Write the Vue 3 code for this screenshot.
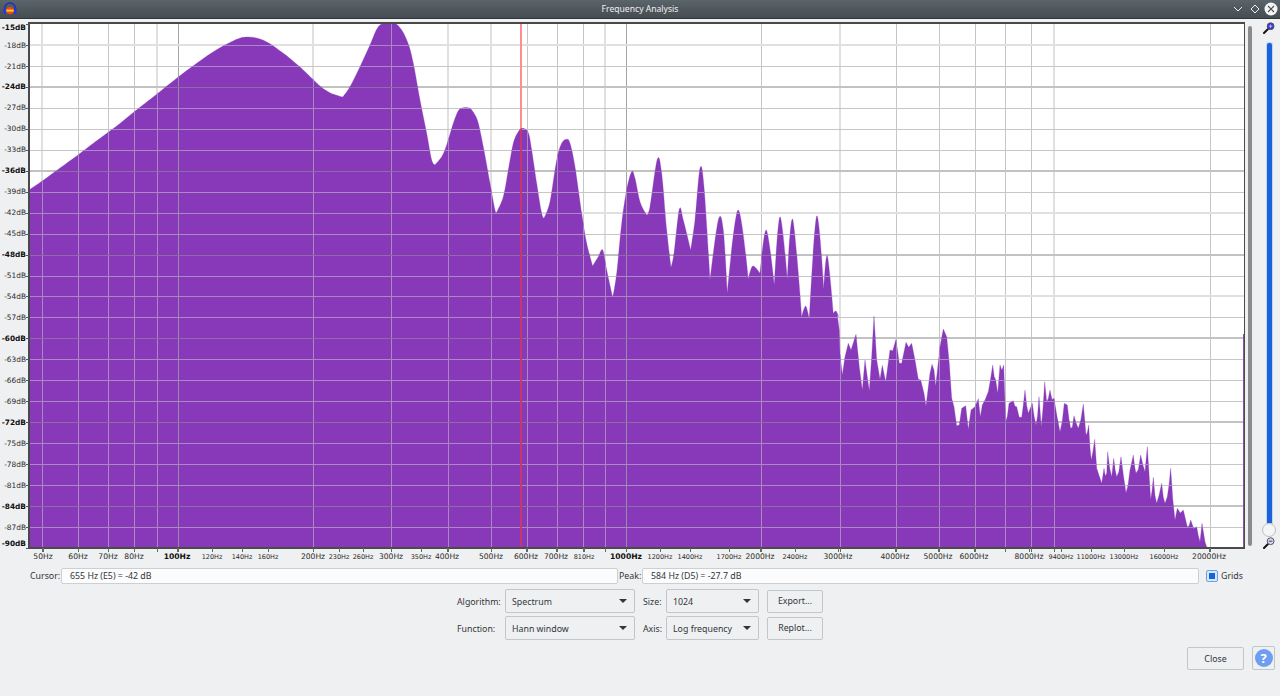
<script setup>
const Y0 = 24
const DY = 20.96
const yOf = (db) => Y0 + ((-15 - db) / 3) * DY

// traced outline, per zoomed region: [originX, originY, points in 3x zoom pixels]
const map = (ox, oy, pts) => pts.map(([x, y]) => [ox + x / 3, oy + y / 3])
const head = [
  [29, 190], [45, 179], [60, 168], [78, 155], [95, 142], [118, 125], [134, 112], [157, 94], [177, 78], [193, 66],
  [213, 52], [233, 41], [246, 37], [263, 40], [283, 53], [300, 67], [320, 86]
]
const mid = map(330, 20, [
  [0, 218], [20, 226], [38, 231], [60, 200], [90, 140], [120, 75], [140, 28], [155, 12], [175, 9], [195, 10], [215, 30], [235, 72],
  [250, 130], [270, 240], [290, 340], [305, 420], [315, 434], [335, 410], [350, 375], [370, 310], [385, 272], [400, 263],
  [420, 265], [435, 285], [445, 310], [460, 380], [480, 490], [495, 570], [500, 576], [520, 530], [535, 450], [550, 370],
  [565, 335], [578, 325], [595, 338], [605, 390], [620, 490], [635, 580], [642, 594], [660, 545], [680, 420], [695, 370],
  [710, 358], [720, 370], [735, 440], [755, 580], [770, 670], [788, 738], [805, 710], [818, 690], [830, 750], [848, 832]
])
const peaks = map(600, 120, [
  [50, 460], [65, 310], [80, 210], [95, 155], [105, 175], [120, 245], [140, 285], [150, 260], [172, 118], [185, 160], [200, 330],
  [213, 442], [222, 400], [238, 268], [250, 300], [272, 390], [285, 300], [300, 145], [312, 200], [330, 480], [355, 300],
  [370, 330], [382, 520], [414, 270], [445, 478], [458, 438], [480, 460], [499, 330], [523, 495], [540, 290], [562, 478],
  [578, 298], [605, 590], [617, 558], [628, 598], [650, 288], [671, 507], [682, 407], [700, 580], [708, 573], [716, 590]
])
const tail = map(830, 300, [
  [22, 45], [28, 90], [30, 160], [37, 225], [45, 170], [55, 130], [63, 150], [78, 103], [88, 200], [97, 270], [105, 180],
  [112, 230], [118, 272], [125, 170], [132, 48], [140, 180], [150, 238], [157, 196], [167, 245], [180, 150], [188, 152], [198, 118],
  [208, 190], [215, 190], [228, 127], [236, 142], [245, 130], [255, 180], [265, 238], [272, 240], [282, 280], [288, 318], [300, 220],
  [306, 193], [312, 210], [317, 258], [330, 140], [340, 87], [350, 110], [358, 190], [365, 295], [372, 320], [380, 378], [388, 374],
  [395, 325], [407, 317], [415, 388], [423, 330], [435, 320], [445, 296], [451, 350], [457, 315], [465, 300], [475, 275], [488, 195],
  [497, 240], [503, 280], [510, 195], [521, 195], [527, 365], [537, 310], [550, 302], [560, 320], [575, 352], [585, 270], [595, 340],
  [607, 310], [618, 375], [627, 290], [634, 380], [644, 245], [650, 305], [660, 270], [672, 295], [690, 395], [703, 310], [712, 315],
  [722, 385], [732, 347], [745, 385], [760, 312], [768, 405], [776, 375], [784, 480], [794, 418], [800, 505], [815, 550], [822, 505],
  [830, 520], [833, 455], [845, 530], [851, 475], [860, 530], [873, 470], [888, 578], [900, 510], [910, 465], [918, 520], [932, 465],
  [945, 515], [952, 440], [962, 598], [970, 532], [980, 610], [995, 550], [1005, 610], [1012, 590], [1022, 505], [1035, 660],
  [1042, 625], [1060, 630], [1072, 680], [1082, 660], [1100, 680], [1110, 725], [1116, 670], [1125, 725], [1135, 742]
])

const f = (n) => n.toFixed(1)
const isValley = (a, b, c) => a && c && b[1] >= a[1] && b[1] >= c[1]
function smooth(pts) {
  let d = `M${f(pts[0][0])} ${f(pts[0][1])}`
  for (let i = 0; i < pts.length - 1; i++) {
    const p0 = pts[i - 1] || pts[i]
    const p1 = pts[i]
    const p2 = pts[i + 1]
    const p3 = pts[i + 2] || p2
    // valleys in the spectrum are sharp, so their tangent collapses to a corner
    const c1 = isValley(pts[i - 1], p1, p2)
      ? p1
      : [p1[0] + (p2[0] - p0[0]) / 6, p1[1] + (p2[1] - p0[1]) / 6]
    const c2 = isValley(p1, p2, pts[i + 2])
      ? p2
      : [p2[0] - (p3[0] - p1[0]) / 6, p2[1] - (p3[1] - p1[1]) / 6]
    d += `C${f(c1[0])} ${f(c1[1])} ${f(c2[0])} ${f(c2[1])} ${f(p2[0])} ${f(p2[1])}`
  }
  return d
}

// the high end is jagged at a finer scale than the traced points
function roughen(pts) {
  const out = []
  pts.forEach((p, i) => {
    out.push(p)
    const q = pts[i + 1]
    if (q && p[0] > 985 && q[0] - p[0] > 2.5) {
      const k = (i * 7) % 5
      out.push([(p[0] + q[0]) / 2, (p[1] + q[1]) / 2 + k * 1.3])
    }
  })
  return out
}

const spectrumPath =
  smooth([...head, ...mid, ...peaks]) +
  roughen(tail).map((p) => `L${f(p[0])} ${f(p[1])}`).join('') +
  'L1208.5 548L29.5 548Z'

const LIGHT = 'light'
const MID = 'mid'
const DARK = 'dark'
const xOf = (hz) => Math.round(177.5 + 448.5 * Math.log10(hz / 100))
const vLines = [
  [50, LIGHT], [60, MID], [70, MID], [80, MID], [90, LIGHT], [100, DARK],
  [200, LIGHT], [300, MID], [400, LIGHT], [500, LIGHT], [600, MID], [700, MID], [800, MID], [900, LIGHT], [1000, DARK],
  [2000, MID], [3000, LIGHT], [4000, MID], [5000, MID], [6000, MID], [7000, MID], [8000, MID], [9000, LIGHT], [20000, MID]
].map(([hz, kind]) => ({ x: xOf(hz), kind }))

const lightDb = [-18, -42, -54]
const hLines = []
for (let db = -18; db >= -87; db -= 3) {
  hLines.push({
    y: Math.round(yOf(db)),
    kind: (db + 24) % 12 === 0 ? DARK : lightDb.includes(db) ? LIGHT : MID
  })
}

const dbLabels = []
for (let db = -15; db >= -90; db -= 3) {
  const y = db === -15 ? 27 : db === -90 ? 543 : yOf(db)
  dbLabels.push({
    text: `${db}dB`,
    y: y + 2.6,
    bold: db === -15 || db === -90 || (db + 24) % 12 === 0,
    tick: Math.round(yOf(db))
  })
}

const hzLabels = [
  ['50Hz', 43, 'big'], ['60Hz', 78, 'big'], ['70Hz', 108, 'big'], ['80Hz', 134, 'big'], ['100Hz', 177, 'bold'],
  ['120Hz', 212, 'small'], ['140Hz', 242, 'small'], ['160Hz', 268, 'small'], ['200Hz', 313, 'big'], ['230Hz', 339, 'small'],
  ['260Hz', 363, 'small'], ['300Hz', 391, 'big'], ['350Hz', 421, 'small'], ['400Hz', 447, 'big'], ['500Hz', 491, 'big'],
  ['600Hz', 526, 'big'], ['700Hz', 556, 'big'], ['810Hz', 584, 'small'], ['1000Hz', 626, 'bold'], ['1200Hz', 660, 'small'],
  ['1400Hz', 690, 'small'], ['1700Hz', 729, 'small'], ['2000Hz', 760, 'big'], ['2400Hz', 795, 'small'], ['3000Hz', 838, 'big'],
  ['4000Hz', 895, 'big'], ['5000Hz', 938, 'big'], ['6000Hz', 974, 'big'], ['8000Hz', 1029, 'big'], ['9400Hz', 1061, 'small'],
  ['11000Hz', 1091, 'small'], ['13000Hz', 1124, 'small'], ['16000Hz', 1164, 'small'], ['20000Hz', 1209, 'big']
].map(([text, x, kind]) => ({ text, x, kind }))

const tickXs = [...new Set([...vLines.map((l) => l.x), ...hzLabels.map((l) => l.x)])]
</script>

<template>
  <div class="window">
    <header class="titlebar">
      <svg class="app-icon" width="14" height="14" viewBox="0 0 14 14">
        <path d="M1.6 8V6.2a5.4 5.2 0 0 1 10.8 0V8" fill="none" stroke="#1b2fc4" stroke-width="1.5" />
        <rect x="0.4" y="6.4" width="3" height="5.6" rx="1.4" fill="#1d3be0" />
        <rect x="10.6" y="6.4" width="3" height="5.6" rx="1.4" fill="#1d3be0" />
        <ellipse cx="7" cy="8.6" rx="4" ry="3.7" fill="#f0451c" />
        <rect x="3.4" y="7.6" width="7.2" height="2" fill="#f8cf1e" />
      </svg>
      <span class="title">Frequency Analysis</span>
      <div class="win-buttons">
        <svg width="10" height="8" viewBox="0 0 10 8"><path d="M1 2l4 4 4-4" fill="none" stroke="#eff0f1" stroke-width="1" /></svg>
        <svg width="10" height="10" viewBox="0 0 10 10"><path d="M5 1l4 4-4 4-4-4z" fill="none" stroke="#eff0f1" stroke-width="1" /></svg>
        <svg class="win-close" width="14" height="14" viewBox="0 0 14 14">
          <circle cx="7" cy="7" r="6.5" fill="#f4f5f5" />
          <path d="M4 4l6 6M10 4l-6 6" stroke="#454c52" stroke-width="1.1" />
        </svg>
      </div>
    </header>

    <div class="plot-row">
      <svg class="plot" width="1246" height="546" viewBox="0 19 1246 546">
        <defs>
          <clipPath id="spectrum-clip"><path :d="spectrumPath" /></clipPath>
        </defs>
        <rect x="29" y="23" width="1215" height="525" fill="#fff" />

        <g shape-rendering="crispEdges">
          <line v-for="l in vLines" :key="'v' + l.x" :x1="l.x" :x2="l.x" y1="23" y2="548" :class="['w', 'v', l.kind]" />
          <line v-for="l in hLines" :key="'h' + l.y" x1="29" x2="1244" :y1="l.y" :y2="l.y" :class="['w', l.kind]" />
        </g>
        <rect x="520" y="23" width="2" height="525" fill="#ff8f8f" />

        <path :d="spectrumPath" class="spectrum" />

        <g clip-path="url(#spectrum-clip)" shape-rendering="crispEdges">
          <line v-for="l in vLines" :key="'pv' + l.x" :x1="l.x" :x2="l.x" y1="23" y2="548" :class="['p', 'v', l.kind]" />
          <line v-for="l in hLines" :key="'ph' + l.y" x1="29" x2="1244" :y1="l.y" :y2="l.y" :class="['p', l.kind]" />
          <rect x="520" y="23" width="2" height="525" fill="#c4386c" />
        </g>

        <g shape-rendering="crispEdges">
          <line x1="1243.5" x2="1243.5" y1="334" y2="548" stroke="#8a50ae" />
          <path d="M29 548V23H1244.5V548" class="frame" />
          <line x1="29" x2="1245" y1="548" y2="548" class="frame" />
          <line v-for="l in dbLabels" :key="'t' + l.text" x1="26" x2="29" :y1="l.tick" :y2="l.tick" stroke="#555" />
          <line v-for="x in tickXs" :key="'x' + x" :x1="x" :x2="x" y1="548" y2="552" stroke="#666" />
        </g>

        <text v-for="l in dbLabels" :key="l.text" x="26" :y="l.y" text-anchor="end" :class="['db', { bold: l.bold }]">{{ l.text }}</text>
        <text v-for="l in hzLabels" :key="l.text" :x="l.x" y="558.5" text-anchor="middle" :class="['hz', l.kind]">{{ l.text }}</text>
      </svg>

      <div class="scroll-thumb"></div>

      <div class="zoom-col">
        <svg width="12" height="12" viewBox="0 0 12 12">
          <path d="M5 7L1 11" stroke="#111" stroke-width="2" stroke-linecap="round" />
          <circle cx="7.6" cy="4.2" r="3.4" fill="#3232e0" stroke="#555" stroke-width="1" />
          <path d="M5.8 4.2h3.6M7.6 2.4v3.6" stroke="#cfd2f5" stroke-width=".8" />
        </svg>
        <div class="zoom-track">
          <div class="zoom-fill"></div>
          <div class="zoom-handle"></div>
        </div>
        <svg width="12" height="12" viewBox="0 0 12 12">
          <path d="M5 7L1 11" stroke="#111" stroke-width="2" stroke-linecap="round" />
          <circle cx="7.6" cy="4.2" r="3.4" fill="#d9dae6" stroke="#555" stroke-width="1" />
          <path d="M5.8 4.2h3.6" stroke="#3232c0" stroke-width="1" />
        </svg>
      </div>
    </div>

    <div class="readouts">
      <label class="lbl cursor-lbl">Cursor:</label>
      <div class="field">655 Hz (E5) = -42 dB</div>
      <label class="lbl peak-lbl">Peak:</label>
      <div class="field">584 Hz (D5) = -27.7 dB</div>
      <span class="check"><span class="check-mark"></span></span>
      <label class="lbl">Grids</label>
    </div>

    <div class="settings">
      <label class="lbl">Algorithm:</label>
      <div class="combo">Spectrum<i></i></div>
      <label class="lbl">Size:</label>
      <div class="combo">1024<i></i></div>
      <button class="btn small-btn">Export...</button>

      <label class="lbl">Function:</label>
      <div class="combo">Hann window<i></i></div>
      <label class="lbl">Axis:</label>
      <div class="combo">Log frequency<i></i></div>
      <button class="btn small-btn">Replot...</button>
    </div>

    <div class="footer">
      <button class="btn close-btn">Close</button>
      <button class="btn help-btn"><span class="help-icon">?</span></button>
    </div>
  </div>
</template>

<style scoped>
.window {
  width: 1280px;
  height: 696px;
  background: #eff0f1;
  color: #31363b;
  font-family: "Noto Sans", sans-serif;
  font-size: 8.8px;
  overflow: hidden;
  display: flex;
  flex-direction: column;
}
.titlebar {
  position: relative;
  height: 19px;
  box-sizing: border-box;
  flex: none;
  display: flex;
  align-items: center;
  justify-content: center;
  background: linear-gradient(#5b646b, #454c52);
  border-bottom: 1px solid #30363a;
}
.app-icon {
  position: absolute;
  left: 3px;
  top: 2px;
}
.title {
  color: #eff0f1;
  font-size: 8.6px;
}
.win-buttons {
  position: absolute;
  right: 2px;
  top: 2px;
  display: flex;
  align-items: center;
  gap: 7px;
  height: 14px;
}
.win-close {
  margin-left: -3px;
}
.plot-row {
  height: 546px;
  flex: none;
  display: flex;
}
.plot {
  display: block;
  flex: none;
}
.w.light { stroke: #e0e0e0; stroke-width: 2; }
.w.mid { stroke: #c6c6c6; stroke-width: 1; }
.w.dark { stroke: #c2c2c2; stroke-width: 2; }
.w.v.dark { stroke: #a4a4a4; stroke-width: 1; }
.p.light { stroke: #a988c2; stroke-width: 1; }
.p.mid { stroke: #a98bbf; stroke-width: 1; }
.p.dark { stroke: #8d6ca1; stroke-width: 1; }
.p.v.dark { stroke: #9c8aaa; stroke-width: 1; }
.spectrum {
  fill: #8739ba;
  stroke: rgba(135, 57, 186, 0.35);
  stroke-width: 0.8;
}
.frame {
  fill: none;
  stroke: #4a4a4a;
  stroke-width: 1.4;
}
.db {
  font-family: "DejaVu Sans", sans-serif;
  font-size: 7.4px;
  fill: #2a2a2a;
}
.db.bold { font-weight: 700; fill: #111; }
.hz {
  font-family: "DejaVu Sans", sans-serif;
  font-size: 7.6px;
  fill: #2a2a2a;
}
.hz.small { font-size: 6.5px; }
.hz.bold { font-weight: 700; fill: #111; }
.scroll-thumb {
  flex: none;
  width: 4px;
  margin: 7px 0 19px 2px;
  border-radius: 2px;
  background: #8a8b8c;
}
.zoom-col {
  flex: none;
  width: 28px;
  margin-left: 3px;
  display: flex;
  flex-direction: column;
  align-items: center;
  padding: 3px 0 16px;
  box-sizing: border-box;
}
.zoom-track {
  flex: 1;
  width: 14px;
  display: flex;
  flex-direction: column;
  align-items: center;
  padding-top: 9px;
}
.zoom-fill {
  flex: 1;
  width: 5px;
  border-radius: 2px 2px 0 0;
  background: #1a62dc;
  box-shadow: 0 0 0 1px #c4d6ef;
}
.zoom-handle {
  width: 12px;
  height: 12px;
  flex: none;
  border-radius: 50%;
  background: #f4f5f6;
  border: 1px solid #bcbfc2;
}
.readouts {
  flex: none;
  height: 16px;
  margin-top: 3px;
  padding-left: 30px;
  display: flex;
  align-items: center;
}
.lbl {
  white-space: nowrap;
}
.settings .lbl {
  padding-top: 1px;
}
.cursor-lbl { width: 31px; }
.peak-lbl { width: 23px; padding-left: 1px; }
.field {
  box-sizing: border-box;
  width: 557px;
  height: 16px;
  padding-left: 8px;
  line-height: 14px;
  background: #fcfcfc;
  border: 1px solid #cdd0d2;
  border-radius: 2px;
}
.check {
  box-sizing: border-box;
  width: 12px;
  height: 12px;
  margin: 0 3px 0 7px;
  padding: 2px;
  border: 1px solid #6f9fe0;
  border-radius: 2px;
  background: #d8e6f7;
}
.check-mark {
  display: block;
  width: 100%;
  height: 100%;
  background: #1464e0;
}
.settings {
  flex: none;
  margin-top: 5px;
  display: grid;
  grid-template-columns: 48px 138px 23px 93px 64px;
  grid-auto-rows: 24px;
  row-gap: 3px;
  justify-content: center;
  align-items: center;
}
.combo {
  position: relative;
  box-sizing: border-box;
  height: 24px;
  line-height: 24px;
  padding-left: 6px;
  background: #eff0f1;
  border: 1px solid #c3c6c8;
  border-radius: 2px;
  white-space: nowrap;
}
.settings .combo:nth-child(2),
.settings .combo:nth-child(7) {
  width: 130px;
}
.combo i {
  position: absolute;
  right: 7px;
  top: 9px;
  border-left: 4px solid transparent;
  border-right: 4px solid transparent;
  border-top: 4px solid #31363b;
}
.btn {
  box-sizing: border-box;
  font: inherit;
  color: inherit;
  background: #eff0f1;
  border: 1px solid #c3c6c8;
  border-radius: 2px;
  padding: 0;
}
.small-btn {
  width: 56px;
  height: 23px;
  margin-left: 8px;
  justify-self: start;
}
.footer {
  flex: none;
  margin-top: 6px;
  padding-right: 5px;
  display: flex;
  justify-content: flex-end;
  gap: 8px;
}
.close-btn {
  width: 57px;
  height: 23px;
  margin-top: 1px;
}
.help-btn {
  width: 23px;
  height: 24px;
  display: flex;
  align-items: center;
  justify-content: center;
}
.help-icon {
  width: 18px;
  height: 18px;
  border-radius: 50%;
  background: #6d9ef2;
  color: #fff;
  font-weight: 700;
  font-size: 13px;
  line-height: 18px;
  text-align: center;
}
</style>
